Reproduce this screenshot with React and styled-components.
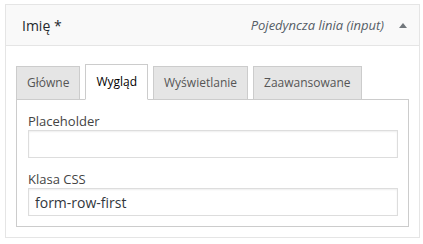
import React, { useState } from "react";
import styled, { createGlobalStyle } from "styled-components";

const GlobalStyle = createGlobalStyle`
  body {
    margin: 0;
    background: #ffffff;
    font-family: "Open Sans", "Liberation Sans", sans-serif;
  }
`;

const TABS = ["Główne", "Wygląd", "Wyświetlanie", "Zaawansowane"];

export default function App() {
  const [active, setActive] = useState(1);

  return (
    <>
      <GlobalStyle />
      <Box>
        <Header>
          <Title>Imię *</Title>
          <Type>Pojedyncza linia (input)</Type>
          <Toggle />
        </Header>
        <Body>
          <Tabs>
            {TABS.map((tab, i) => (
              <Tab key={tab} isActive={i === active} onClick={() => setActive(i)}>
                {tab}
              </Tab>
            ))}
          </Tabs>
          <Panel>
            <Field>
              <Label>Placeholder</Label>
              <Input defaultValue="" />
            </Field>
            <Field>
              <Label>Klasa CSS</Label>
              <Input defaultValue="form-row-first" />
            </Field>
          </Panel>
        </Body>
      </Box>
    </>
  );
}

const Box = styled.div`
  margin: 4px 0 0 5px;
  width: 413px;
  border: 1px solid #e5e5e5;
  background: #fff;
`;

const Header = styled.div`
  display: flex;
  align-items: center;
  height: 40px;
  padding: 0 12px 0 16px;
  background: #f9f9f9;
  border-bottom: 1px solid #e5e5e5;
`;

const Title = styled.span`
  flex: 1;
  font-size: 14px;
  color: #23282d;
`;

const Type = styled.span`
  font-size: 13px;
  font-style: italic;
  color: #555d66;
`;

/* small filled triangle pointing up */
const Toggle = styled.span`
  margin-left: 15px;
  width: 0;
  height: 0;
  border-left: 4px solid transparent;
  border-right: 4px solid transparent;
  border-bottom: 5px solid #72777c;
`;

const Body = styled.div`
  padding: 18px 10px 10px 10px;
`;

const Tabs = styled.div`
  display: flex;
  align-items: flex-end;
  gap: 5px;
  margin-bottom: -1px;
  position: relative;
`;

const Tab = styled.button`
  all: unset;
  cursor: pointer;
  box-sizing: border-box;
  padding: 0 10px;
  font-size: 12px;
  line-height: 32px;
  border: 1px solid #ccc;
  ${({ isActive }) =>
    isActive
      ? `
  background: #fff;
  color: #000;
  border-bottom-color: #fff;
  line-height: 34px;
  `
      : `
  background: #e5e5e5;
  color: #555;
  border-bottom: none;
  margin-bottom: 1px;
  `}
`;

const Panel = styled.div`
  border: 1px solid #ccc;
  padding: 12px 10px 10px 11px;
  display: flex;
  flex-direction: column;
  gap: 12px;
`;

const Field = styled.div`
  display: flex;
  flex-direction: column;
`;

const Label = styled.label`
  font-size: 13px;
  line-height: 18px;
  color: #444;
`;

const Input = styled.input`
  box-sizing: border-box;
  height: 28px;
  margin: 0;
  padding: 0 6px;
  border: 1px solid #ddd;
  box-shadow: inset 0 1px 2px rgba(0, 0, 0, 0.07);
  background: #fff;
  font-family: inherit;
  font-size: 14px;
  color: #32373c;
  outline: none;
`;
